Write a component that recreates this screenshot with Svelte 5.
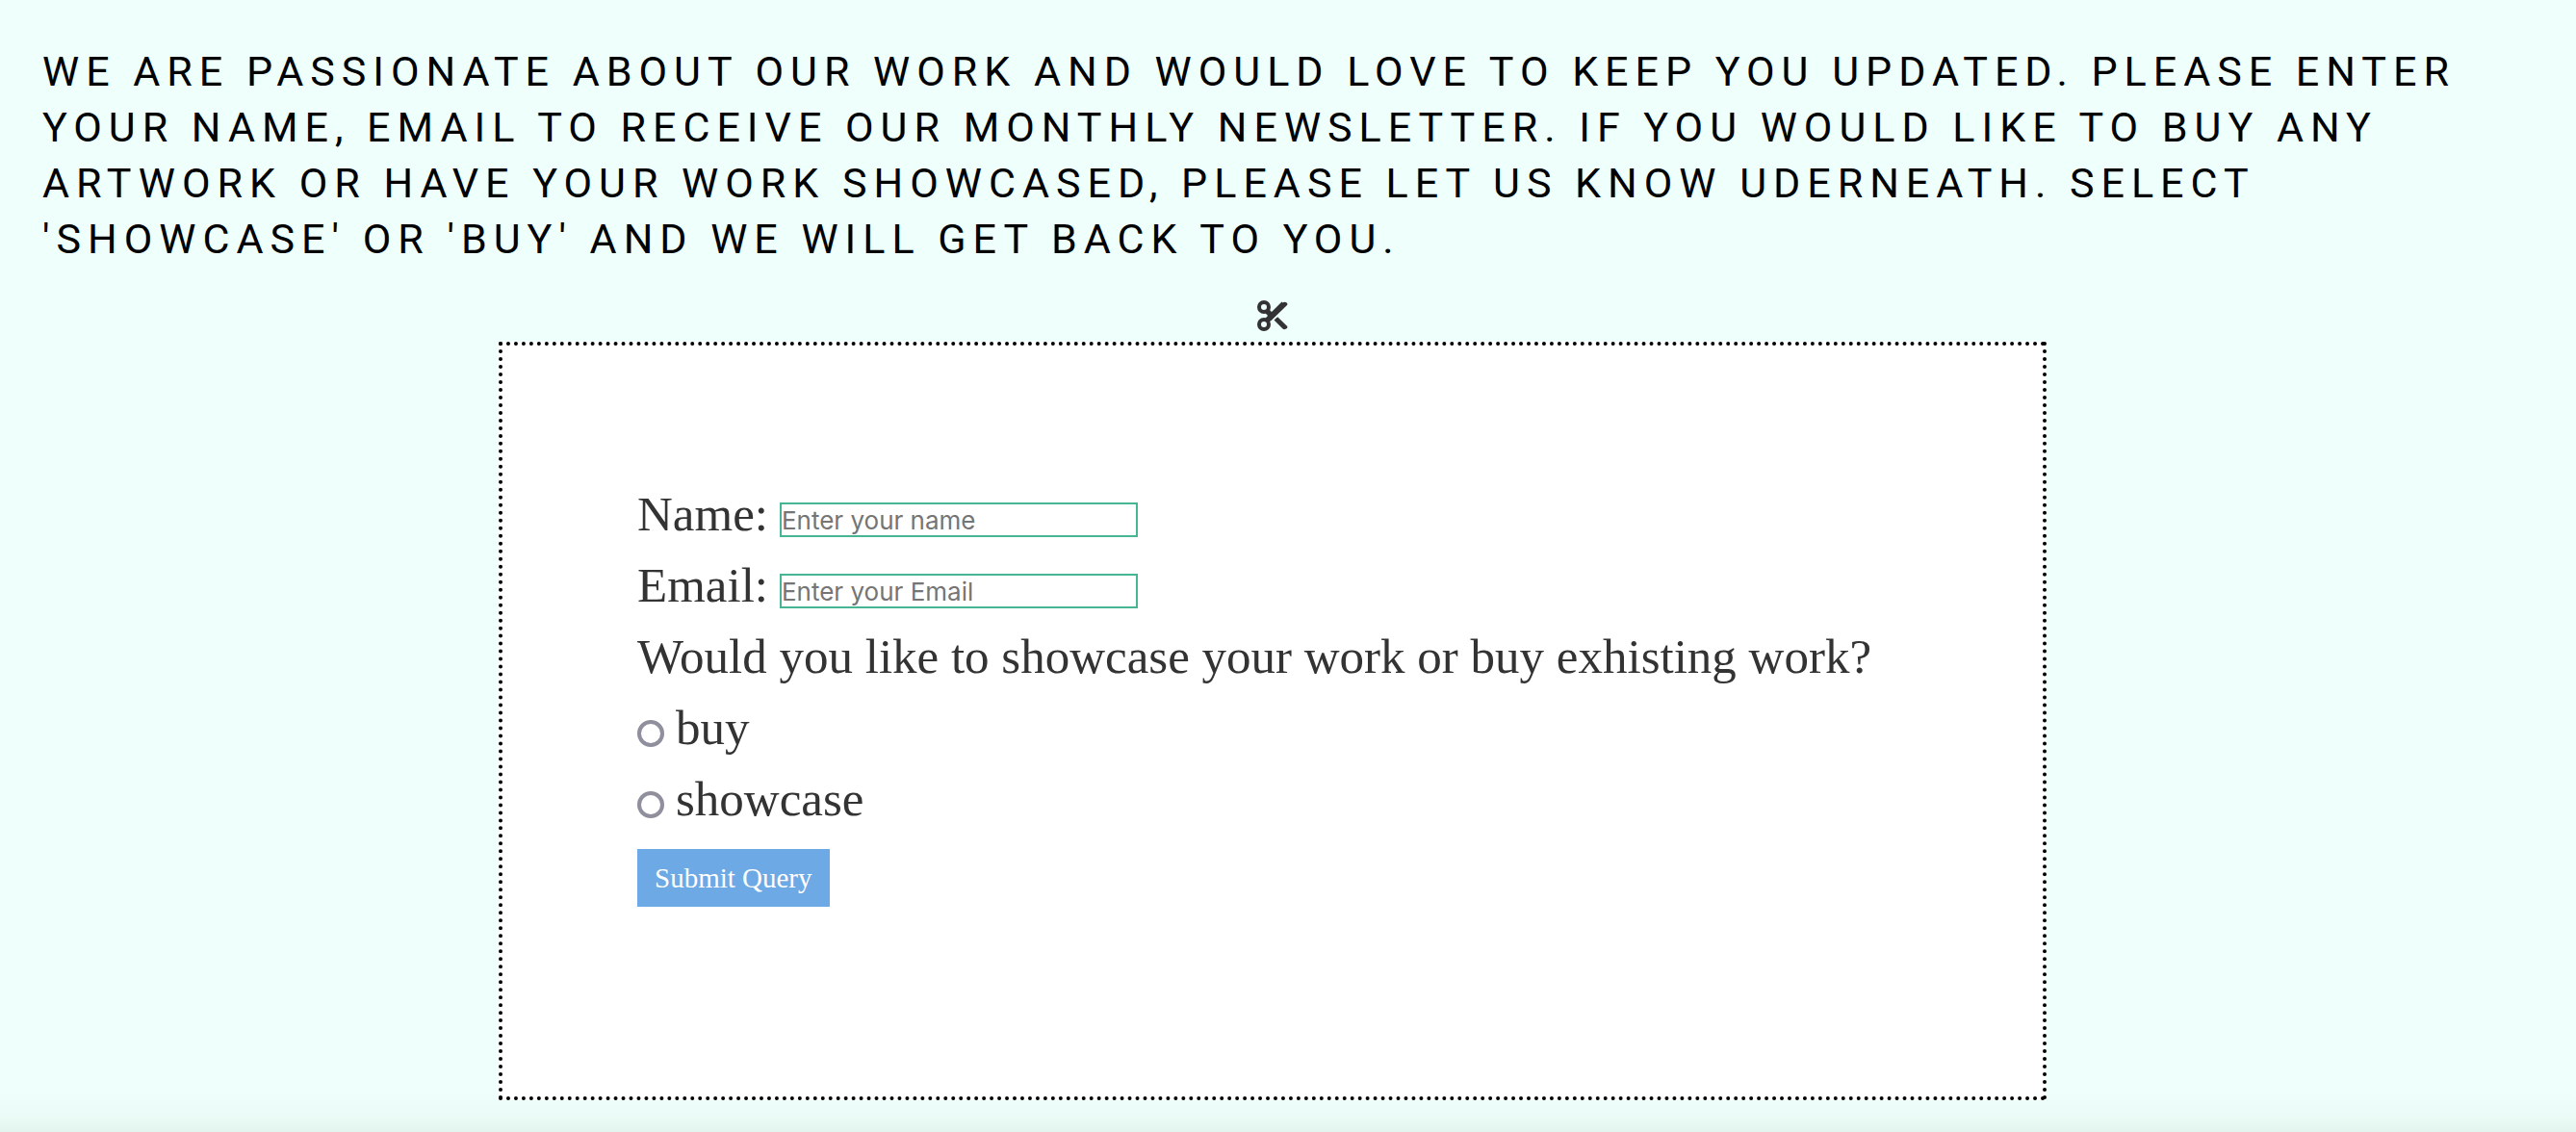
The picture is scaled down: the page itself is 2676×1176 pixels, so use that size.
<script>
  let name = $state('');
  let email = $state('');
  let choice = $state('');
</script>

<main>
  <p class="intro">
    We are passionate about our work and would love to keep you updated. Please enter
    your name, email to receive our monthly newsletter. If you would like to buy any
    artwork or have your work showcased, please let us know uderneath. Select
    'showcase' or 'buy' and we will get back to you.
  </p>

  <svg class="scissors" viewBox="0 0 32 32" aria-hidden="true">
    <g fill="none" stroke="currentColor">
      <circle cx="7" cy="7" r="5" stroke-width="4" />
      <circle cx="7" cy="25" r="5" stroke-width="4" />
      <path d="M10 11L15 16M10 21L27.5 3.5" stroke-width="5.5" />
    </g>
    <path d="M8 20L26.5 2.5Q28.5 1 31 2.8Q32 4 31 5L14 21.5Z" fill="currentColor" />
    <path d="M17.5 20.5L21.2 17.2L31 26.8Q32 28 31 29Q28.500 31 26.500 29.500Z" fill="currentColor" />
  </svg>

  <form onsubmit={(e) => e.preventDefault()}>
    <div class="row">
      <label for="name">Name:</label>
      <input id="name" type="text" placeholder="Enter your name" bind:value={name} />
    </div>
    <div class="row">
      <label for="email">Email:</label>
      <input id="email" type="text" placeholder="Enter your Email" bind:value={email} />
    </div>
    <fieldset>
      <legend>Would you like to showcase your work or buy exhisting work?</legend>
      <div class="row">
        <input id="buy" type="radio" name="choice" value="buy" bind:group={choice} />
        <label for="buy">buy</label>
      </div>
      <div class="row">
        <input id="showcase" type="radio" name="choice" value="showcase" bind:group={choice} />
        <label for="showcase">showcase</label>
      </div>
    </fieldset>
    <button type="submit">Submit Query</button>
  </form>
</main>

<style>
  :global(body) {
    background: #eefffc;
  }
  main {
    box-sizing: border-box;
    min-height: 100vh;
    padding: 45px 76px 33px 44px;
    display: flex;
    flex-direction: column;
    align-items: center;
    color: #333;
    background: linear-gradient(to top, #e3f4ee, #ebfcf7 16px, #eefffc 40px);
  }
  .intro {
    align-self: stretch;
    margin: 0;
    color: #000;
    font: 43px/58px Roboto, sans-serif;
    letter-spacing: 7px;
    text-transform: uppercase;
  }
  .scissors {
    width: 32px;
    height: 32px;
    margin: 35px 0 11px;
  }
  form {
    box-sizing: border-box;
    width: 100%;
    max-width: 1608px;
    padding: 138px 140px 197px;
    border: 4px dotted #000;
    background: #fff;
    font: 51px/74px 'Liberation Serif', serif;
  }
  .row {
    display: flex;
    align-items: center;
    gap: 12px;
    height: 74px;
  }
  input {
    box-sizing: border-box;
    margin: 12px 0 0;
  }
  input[type='text'] {
    width: 372px;
    height: 36px;
    padding: 0;
    border: 2px solid #45b594;
    border-radius: 0;
    background: #fff;
    color: #333;
    font: 26px/32px Inter, sans-serif;
  }
  input::placeholder {
    color: #757575;
    opacity: 1;
  }
  input[type='radio'] {
    appearance: none;
    width: 28px;
    height: 28px;
    border: 4px solid #8f8f9d;
    border-radius: 50%;
    background: #fff;
  }
  input[type='radio']:checked {
    background: radial-gradient(#0060df 50%, #fff 55%);
  }
  fieldset {
    margin: 0;
    padding: 0;
    border: 0;
  }
  legend {
    padding: 0;
  }
  button {
    display: block;
    margin: 15px 0 0;
    padding: 0 18px;
    height: 60px;
    border: 0;
    background: #6da9e4;
    color: #fff;
    font: 29px/58px 'Liberation Serif', serif;
  }
</style>
